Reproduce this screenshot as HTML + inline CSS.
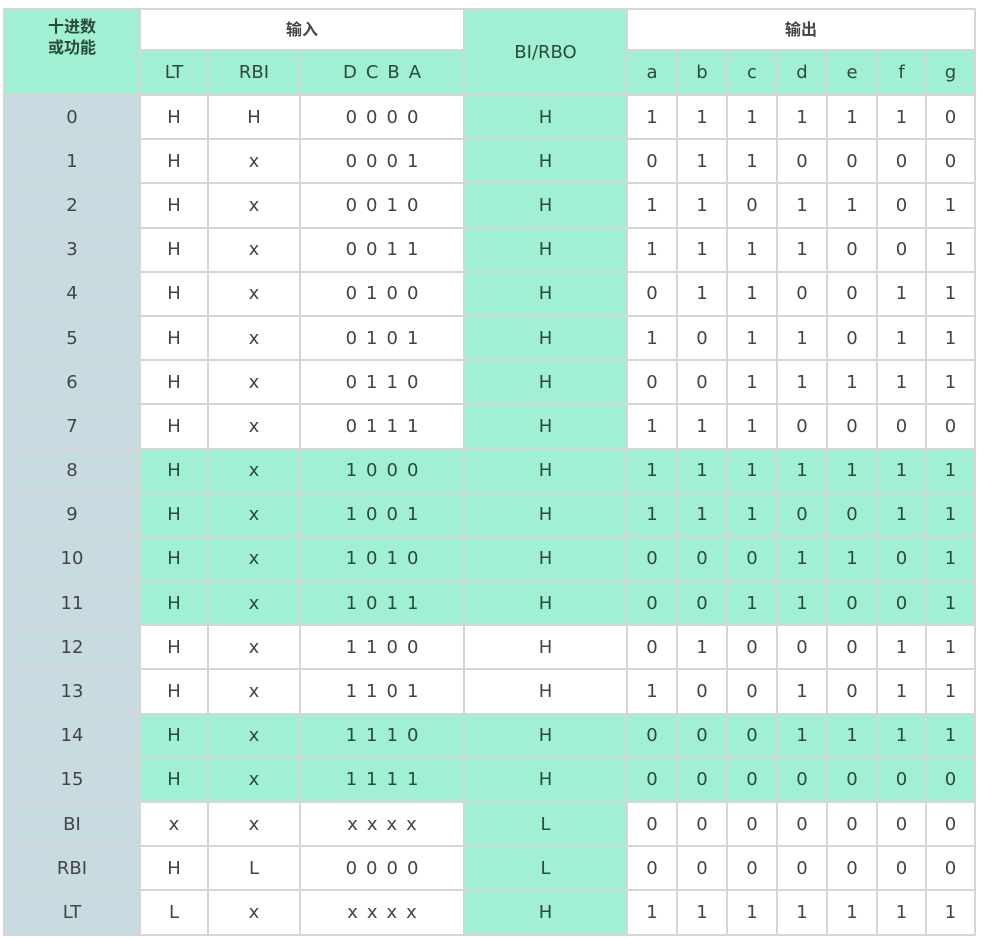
<!DOCTYPE html>
<html><head><meta charset="utf-8"><style>
body{margin:0;background:#fff;width:983px;height:938px;overflow:hidden}
table{position:absolute;left:3px;top:8px;border-collapse:collapse;table-layout:fixed;font-family:"DejaVu Sans","Noto Sans CJK SC",sans-serif;font-size:18px;color:#444}
td{border:2px solid #d6d6d6;text-align:center;padding:0;height:40px;background:#fff;white-space:nowrap}
.h1 td{height:39px}
.h2 td{height:43px}
tr.d td{height:42.2px}
.g{background:#a2f0d4;color:#2a4a3a}
.s{background:#c8dbe0}
.w{letter-spacing:9px;padding-left:9px}
.cn{font-size:16px;font-weight:bold;line-height:21px}
</style></head><body>
<table>
<colgroup><col style="width:136px"><col style="width:68px"><col style="width:92px"><col style="width:164px"><col style="width:163px"><col style="width:50px"><col style="width:50px"><col style="width:50px"><col style="width:50px"><col style="width:50px"><col style="width:49px"><col style="width:49px"></colgroup>
<tr class="h1"><td rowspan="2" class="g cn" style="vertical-align:top;padding-top:6px">十进数<br>或功能</td><td colspan="3" class="cn">输入</td><td rowspan="2" class="g">BI/RBO</td><td colspan="7" class="cn">输出</td></tr>
<tr class="h2"><td class="g">LT</td><td class="g">RBI</td><td class="g w">DCBA</td><td class="g">a</td><td class="g">b</td><td class="g">c</td><td class="g">d</td><td class="g">e</td><td class="g">f</td><td class="g">g</td></tr>
<tr class="d"><td class="s">0</td><td>H</td><td>H</td><td class="w">0000</td><td class="g">H</td><td>1</td><td>1</td><td>1</td><td>1</td><td>1</td><td>1</td><td>0</td></tr>
<tr class="d"><td class="s">1</td><td>H</td><td>x</td><td class="w">0001</td><td class="g">H</td><td>0</td><td>1</td><td>1</td><td>0</td><td>0</td><td>0</td><td>0</td></tr>
<tr class="d"><td class="s">2</td><td>H</td><td>x</td><td class="w">0010</td><td class="g">H</td><td>1</td><td>1</td><td>0</td><td>1</td><td>1</td><td>0</td><td>1</td></tr>
<tr class="d"><td class="s">3</td><td>H</td><td>x</td><td class="w">0011</td><td class="g">H</td><td>1</td><td>1</td><td>1</td><td>1</td><td>0</td><td>0</td><td>1</td></tr>
<tr class="d"><td class="s">4</td><td>H</td><td>x</td><td class="w">0100</td><td class="g">H</td><td>0</td><td>1</td><td>1</td><td>0</td><td>0</td><td>1</td><td>1</td></tr>
<tr class="d"><td class="s">5</td><td>H</td><td>x</td><td class="w">0101</td><td class="g">H</td><td>1</td><td>0</td><td>1</td><td>1</td><td>0</td><td>1</td><td>1</td></tr>
<tr class="d"><td class="s">6</td><td>H</td><td>x</td><td class="w">0110</td><td class="g">H</td><td>0</td><td>0</td><td>1</td><td>1</td><td>1</td><td>1</td><td>1</td></tr>
<tr class="d"><td class="s">7</td><td>H</td><td>x</td><td class="w">0111</td><td class="g">H</td><td>1</td><td>1</td><td>1</td><td>0</td><td>0</td><td>0</td><td>0</td></tr>
<tr class="d"><td class="s">8</td><td class="g">H</td><td class="g">x</td><td class="g w">1000</td><td class="g">H</td><td class="g">1</td><td class="g">1</td><td class="g">1</td><td class="g">1</td><td class="g">1</td><td class="g">1</td><td class="g">1</td></tr>
<tr class="d"><td class="s">9</td><td class="g">H</td><td class="g">x</td><td class="g w">1001</td><td class="g">H</td><td class="g">1</td><td class="g">1</td><td class="g">1</td><td class="g">0</td><td class="g">0</td><td class="g">1</td><td class="g">1</td></tr>
<tr class="d"><td class="s">10</td><td class="g">H</td><td class="g">x</td><td class="g w">1010</td><td class="g">H</td><td class="g">0</td><td class="g">0</td><td class="g">0</td><td class="g">1</td><td class="g">1</td><td class="g">0</td><td class="g">1</td></tr>
<tr class="d"><td class="s">11</td><td class="g">H</td><td class="g">x</td><td class="g w">1011</td><td class="g">H</td><td class="g">0</td><td class="g">0</td><td class="g">1</td><td class="g">1</td><td class="g">0</td><td class="g">0</td><td class="g">1</td></tr>
<tr class="d"><td class="s">12</td><td>H</td><td>x</td><td class="w">1100</td><td>H</td><td>0</td><td>1</td><td>0</td><td>0</td><td>0</td><td>1</td><td>1</td></tr>
<tr class="d"><td class="s">13</td><td>H</td><td>x</td><td class="w">1101</td><td>H</td><td>1</td><td>0</td><td>0</td><td>1</td><td>0</td><td>1</td><td>1</td></tr>
<tr class="d"><td class="s">14</td><td class="g">H</td><td class="g">x</td><td class="g w">1110</td><td class="g">H</td><td class="g">0</td><td class="g">0</td><td class="g">0</td><td class="g">1</td><td class="g">1</td><td class="g">1</td><td class="g">1</td></tr>
<tr class="d"><td class="s">15</td><td class="g">H</td><td class="g">x</td><td class="g w">1111</td><td class="g">H</td><td class="g">0</td><td class="g">0</td><td class="g">0</td><td class="g">0</td><td class="g">0</td><td class="g">0</td><td class="g">0</td></tr>
<tr class="d"><td class="s">BI</td><td>x</td><td>x</td><td class="w">xxxx</td><td class="g">L</td><td>0</td><td>0</td><td>0</td><td>0</td><td>0</td><td>0</td><td>0</td></tr>
<tr class="d"><td class="s">RBI</td><td>H</td><td>L</td><td class="w">0000</td><td class="g">L</td><td>0</td><td>0</td><td>0</td><td>0</td><td>0</td><td>0</td><td>0</td></tr>
<tr class="d"><td class="s">LT</td><td>L</td><td>x</td><td class="w">xxxx</td><td class="g">H</td><td>1</td><td>1</td><td>1</td><td>1</td><td>1</td><td>1</td><td>1</td></tr>
</table>
</body></html>
